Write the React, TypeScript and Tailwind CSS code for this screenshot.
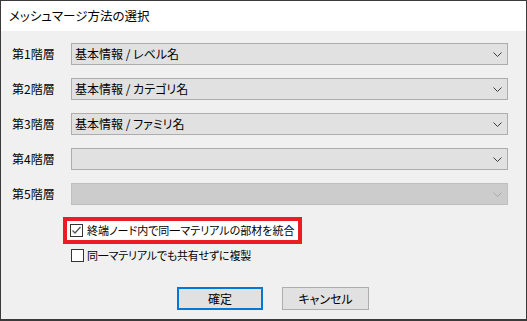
import React from "react";

const font = "font-['Noto_Sans_CJK_JP','Noto_Sans',sans-serif] [font-feature-settings:'palt']";

const Chevron = ({ disabled }: { disabled?: boolean }) => (
  <svg width="9" height="5" viewBox="0 0 9 5" className="shrink-0">
    <path d="M0.5 0.5 L4.5 4.5 L8.5 0.5" fill="none" stroke={disabled ? "#a8a8a8" : "#3c3c3c"} strokeWidth="1" />
  </svg>
);

const Combo = ({ label, value, disabled }: { label: string; value?: string; disabled?: boolean }) => (
  <div className="flex items-center h-[22px]">
    <div className="w-[59px] text-[12px] leading-none text-black">{label}</div>
    <div
      className={`w-[437px] h-[22px] flex items-center justify-between pl-[3px] pr-[5px] border ${
        disabled ? "bg-[#cccccc] border-[#bfbfbf]" : "bg-[#e1e1e1] border-[#adadad]"
      }`}
    >
      <span className="text-[12px] leading-none text-black">{value}</span>
      <Chevron disabled={disabled} />
    </div>
  </div>
);

const CheckBox = ({ checked }: { checked?: boolean }) => (
  <div className="w-[13px] h-[13px] border border-[#333333] bg-white flex items-center justify-center shrink-0">
    {checked && (
      <svg width="11" height="11" viewBox="0 0 11 11">
        <path d="M1.5 5.5 L4 8 L9.5 2" fill="none" stroke="#555555" strokeWidth="1.3" />
      </svg>
    )}
  </div>
);

export default function App() {
  const rows = [
    { label: "第1階層", value: "基本情報 / レベル名" },
    { label: "第2階層", value: "基本情報 / カテゴリ名" },
    { label: "第3階層", value: "基本情報 / ファミリ名" },
    { label: "第4階層", value: "" },
    { label: "第5階層", value: "", disabled: true },
  ];

  return (
    <div className={`w-[527px] h-[321px] flex flex-col border-t border-l border-r border-b-2 border-[#3a3a3a] ${font}`}>
      <div className="h-[30px] bg-white flex items-center pl-[8px] text-[12.5px] text-black">
        メッシュマージ方法の選択
      </div>
      <div className="flex-1 bg-[#f0f0f0] pl-[11px] pt-[12px] flex flex-col">
        <div className="flex flex-col gap-[13px]">
          {rows.map((r) => (
            <Combo key={r.label} label={r.label} value={r.value} disabled={r.disabled} />
          ))}
        </div>

        <div className="mt-[12px] ml-[51px] w-[239px] h-[27px] border-4 border-[#ed1c24] bg-white flex items-center pl-[3px] gap-[4px]">
          <CheckBox checked />
          <span className="text-[11px] leading-none text-black whitespace-nowrap">
            終端ノード内で同一マテリアルの部材を統合
          </span>
        </div>

        <div className="mt-[4px] ml-[59px] h-[14px] flex items-center gap-[3px]">
          <CheckBox />
          <span className="text-[11px] leading-none text-black whitespace-nowrap tracking-[-0.2px]">
            同一マテリアルでも共有せずに複製
          </span>
        </div>

        <div className="mt-[25px] ml-[165px] flex gap-[19px]">
          <button className="w-[86px] h-[23px] border-2 border-[#0078d7] bg-[#e1e1e1] text-[12px] leading-none text-black">
            確定
          </button>
          <button className="w-[87px] h-[23px] border border-[#adadad] bg-[#e1e1e1] text-[12px] leading-none text-black">
            キャンセル
          </button>
        </div>
      </div>
    </div>
  );
}
